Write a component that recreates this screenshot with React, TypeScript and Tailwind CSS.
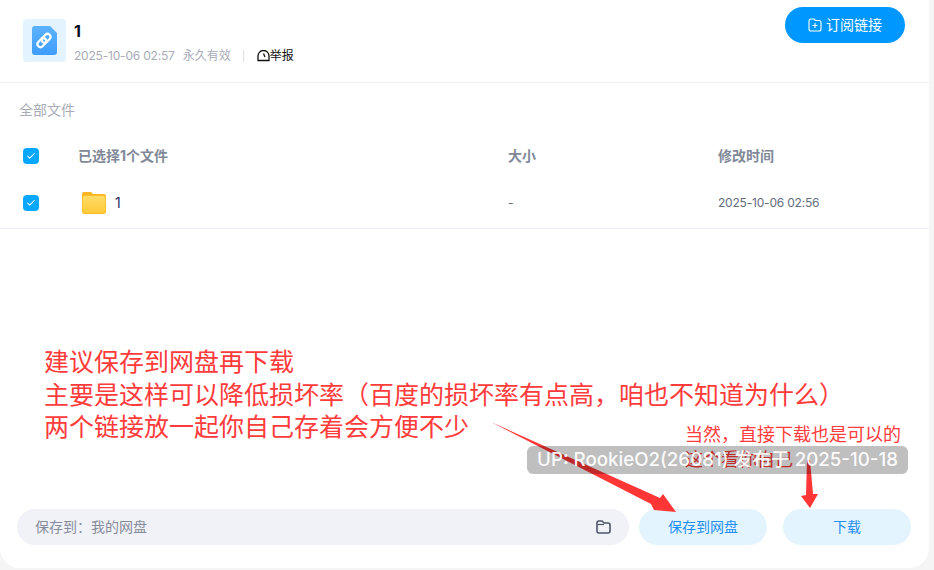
import { Check } from 'lucide-react';

const FONT = '[font-family:Inter,"Noto_Sans_CJK_SC",sans-serif]';

const Checkbox = () => (
  <div className="flex h-4 w-4 items-center justify-center rounded-[4px] bg-[#06a7ff]">
    <Check className="h-2.5 w-2.5 text-white" strokeWidth={2.5} />
  </div>
);

const LinkFileIcon = () => (
  <div className="flex h-[43px] w-[43px] items-center justify-center rounded-[4px] bg-[#e3f3ff]">
    <svg width="25" height="29" viewBox="0 0 25 29">
      <defs>
        <linearGradient id="file" x1="0" y1="0" x2="0" y2="1">
          <stop offset="0" stopColor="#5cb2ff" />
          <stop offset="1" stopColor="#3f9dff" />
        </linearGradient>
      </defs>
      <path d="M3 0h15l7 7v19a3 3 0 0 1-3 3H3a3 3 0 0 1-3-3V3a3 3 0 0 1 3-3z" fill="url(#file)" />
      <g fill="none" stroke="#fff" strokeWidth="2.200" transform="rotate(-45 12 14.500)">
        <rect x="4" y="11.500" width="10" height="6" rx="3" />
        <rect x="10" y="11.500" width="10" height="6" rx="3" />
      </g>
    </svg>
  </div>
);

const FolderIcon = () => (
  <svg width="24" height="22" viewBox="0 0 24 22">
    <defs>
      <linearGradient id="folder" x1="0" y1="0" x2="0" y2="1">
        <stop offset="0" stopColor="#ffdc66" />
        <stop offset="1" stopColor="#ffc93a" />
      </linearGradient>
    </defs>
    <path d="M2 0h7l2 2h11a2 2 0 0 1 2 2v3H0V2a2 2 0 0 1 2-2z" fill="#ffb51f" />
    <rect x="0" y="3" width="24" height="19" rx="2.500" fill="#ffbe2a" />
    <rect x="0.800" y="4" width="22.400" height="17" rx="2" fill="url(#folder)" />
  </svg>
);

const SmallFolderIcon = () => (
  <svg width="15" height="14" viewBox="0 0 15 14" fill="none">
    <path d="M1 3a2 2 0 0 1 2-2h3l2 2h4a2 2 0 0 1 2 2v6a2 2 0 0 1-2 2H3a2 2 0 0 1-2-2z" stroke="#4f5668" strokeWidth="1.600" />
    <path d="M1.500 4.500H8" stroke="#4f5668" strokeWidth="1.200" />
  </svg>
);

const App = () => {
  return (
    <div className={`relative h-[570px] w-[934px] overflow-hidden bg-[#f5f5f6] ${FONT}`}>
      <div className="flex h-[568px] w-[929px] flex-col rounded-b-[20px] bg-white">
        <div className="flex h-[83px] shrink-0 justify-between border-b border-[#f1f1f6] pl-[23px] pr-6">
          <div className="flex items-start gap-2 pt-[19px]">
            <LinkFileIcon />
            <div>
              <div className="text-base leading-6 font-bold text-[#03081a]">1</div>
              <div className="mt-[3px] flex items-center text-xs leading-5 text-[#a8acb8]">
                <span className="tracking-[-0.2px]">2025-10-06 02:57</span>
                <span className="ml-2">永久有效</span>
                <span className="mx-[12px] h-3 w-px bg-[#dedfe3]" />
                <svg width="13" height="12" viewBox="0 0 13 12" fill="none" className="ml-[1px]">
                  <path d="M1 10.500V6a5.500 5.500 0 0 1 11 0v4.500z" stroke="#111" strokeWidth="1.300" />
                  <path d="M6.500 3.500L8 7" stroke="#111" strokeWidth="1.300" />
                </svg>
                <span className="text-[#111]">举报</span>
              </div>
            </div>
          </div>
          <div className="pt-[7px]">
            <button className="flex h-9 w-[120px] items-center justify-center gap-1 rounded-full bg-[#0098ff] text-sm text-white">
              <svg width="14" height="14" viewBox="0 0 14 14" fill="none">
                <path d="M1 3a2 2 0 0 1 2-2h3l1.500 1.500H11a2 2 0 0 1 2 2V11a2 2 0 0 1-2 2H3a2 2 0 0 1-2-2z" stroke="#fff" strokeWidth="1.100" />
                <path d="M4.500 7.500h5M7 5v5" stroke="#fff" strokeWidth="1.100" />
              </svg>
              订阅链接
            </button>
          </div>
        </div>

        <div className="pt-[17px] pl-[19px] text-sm leading-5 text-[#a8acb8]">全部文件</div>

        <div className="flex h-[59px] items-center pt-[12px] text-sm font-bold text-[#818999]">
          <div className="w-[78px] pl-[23px]">
            <Checkbox />
          </div>
          <div className="w-[430px]">已选择1个文件</div>
          <div className="w-[210px]">大小</div>
          <div>修改时间</div>
        </div>

        <div className="flex h-[50px] items-center border-b border-[#ededf3] pb-[1px] text-xs text-[#636d7d]">
          <div className="w-[82px] pl-[23px]">
            <Checkbox />
          </div>
          <div className="flex w-[426px] items-center gap-[9px]">
            <FolderIcon />
            <span className="text-sm text-[#2e2a5c]">1</span>
          </div>
          <div className="w-[210px]">-</div>
          <div className="tracking-[-0.2px]">2025-10-06 02:56</div>
        </div>

        <div className="flex-1" />

        <div className="flex items-center pb-[23px] pl-[17px]">
          <div className="flex h-9 w-[612px] items-center justify-between rounded-full bg-[#f1f2f8] pr-[18px] pl-[18px] text-sm text-[#878c9c]">
            <span>保存到：我的网盘</span>
            <SmallFolderIcon />
          </div>
          <button className="ml-[10px] h-9 w-[128px] rounded-full bg-[#e3f4fe] text-sm text-[#1e8ff5]">保存到网盘</button>
          <button className="ml-4 h-9 w-[128px] rounded-full bg-[#e3f4fe] text-sm text-[#1e8ff5]">下载</button>
        </div>
      </div>

      {/* annotations drawn over the page */}
      <div className="absolute top-[346px] left-[44px] text-[25px] leading-[32.500px] whitespace-nowrap text-[#ff3b3b]">
        <div>建议保存到网盘再下载</div>
        <div>主要是这样可以降低损坏率（百度的损坏率有点高，咱也不知道为什么）</div>
        <div>两个链接放一起你自己存着会方便不少</div>
      </div>
      <div className="absolute top-[422px] left-[685px] text-[18px] leading-[25px] whitespace-nowrap text-[#ff3b3b]">
        <div>当然，直接下载也是可以的</div>
        <div>这个看你自己</div>
      </div>
      <svg className="absolute top-0 left-0" width="934" height="570" viewBox="0 0 934 570">
        <polygon points="491,422 660,498 663,494 676,512 654,510 651,504" fill="#ff3636" />
        <polygon points="807,460 810,460 813,494 818,494 810,508 801,496 806,495" fill="#ff3636" />
      </svg>
      <div className="absolute top-[446px] left-[527px] flex h-[28px] w-[381px] items-center justify-center rounded-md bg-black/25 text-[18.700px] font-medium whitespace-nowrap text-white/95">
        UP: RookieO2(26081) 发布于 2025-10-18
      </div>
    </div>
  );
};

export default App;
